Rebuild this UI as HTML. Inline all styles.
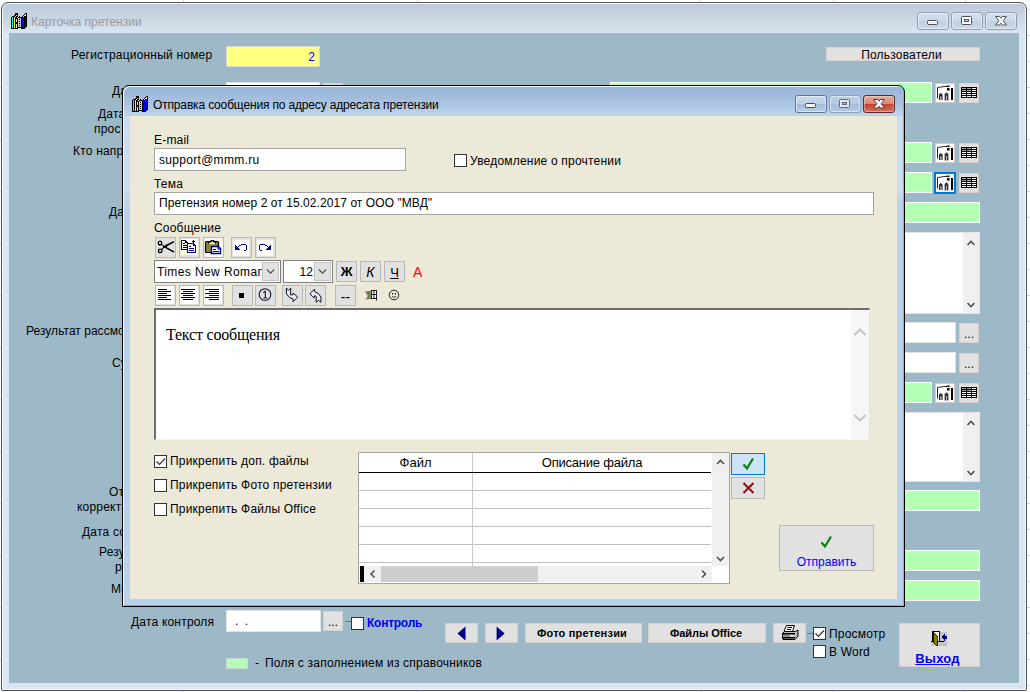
<!DOCTYPE html>
<html lang="ru">
<head>
<meta charset="utf-8">
<title>Карточка претензии</title>
<style>
*{box-sizing:border-box;margin:0;padding:0}
html,body{width:1030px;height:692px;overflow:hidden}
body{position:relative;background:#fff;font-family:"Liberation Sans",sans-serif;font-size:12px;color:#000;
 background-image:repeating-linear-gradient(to bottom,transparent 0,transparent 9px,#d4d4d4 9px,#d4d4d4 10px,transparent 10px,transparent 26px)}
.a{position:absolute;white-space:nowrap}
.vl{position:absolute;top:0;width:1px;height:692px;background:#d4d4d4}
/* main window */
#mw{left:1px;top:2px;width:1026px;height:689px;border:1px solid #555;border-radius:7px 7px 2px 2px;
 background:linear-gradient(to bottom,#bccbdb 0,#c7d4e1 14px,#d2dfeb 24px,#dae6f3 31px,#dbe6f3 100%);box-shadow:inset 0 0 0 1px #f2f6fb}
#mc{left:9px;top:33px;width:1010px;height:650px;background:#9db9c7}
.lbl{position:absolute;white-space:nowrap;line-height:14px;font-size:12px;letter-spacing:0.2px}
.fld{position:absolute;background:#fff;border:1px solid #e3e3e3}
.grn{position:absolute;background:#b3ffb3;border:1px solid #fcfcfc}
.btn{position:absolute;background:#e1e1e1;border:1px solid #d8d0d0;text-align:center;white-space:nowrap}
.cb{position:absolute;width:13px;height:13px;background:#fff;border:1px solid #333}
.cap{position:absolute;top:12px;width:32px;height:18px;border:1px solid #8f9fb3;border-radius:3px;
 background:linear-gradient(to bottom,#d5e0ed 0,#cad7e6 50%,#c0cfe0 50%,#cbd8e7 100%);box-shadow:inset 0 0 0 1px rgba(255,255,255,.45)}
.ib{width:20px;height:20px;background:#fff;border:1px solid #d6cccc;padding-top:1px;line-height:0}
.ig{width:20px;height:20px;padding-top:3px;line-height:0}
.sb{position:absolute;width:16px;background:#f0f0f0;line-height:0}
#dw{left:122px;top:85px;width:783px;height:522px;border:1px solid #000;border-radius:7px 7px 0 0;
 background:linear-gradient(to bottom,#98b4d6 0,#a3bddc 12px,#afc8e4 21px,#bdd3ec 29px,#b9d1ea 31px,#b9d1ea 100%);
 box-shadow:inset 1px 1px 0 0 #f4f8fc,inset -1px -1px 0 0 #35d0f5}
#dc{left:130px;top:116px;width:767px;height:483px;background:#ece9d8}
.dcap{border-color:#5f7591;background:linear-gradient(to bottom,#c9daee 0,#bccfe6 50%,#a3bcda 50%,#b7cce5 100%);box-shadow:inset 0 0 0 1px rgba(255,255,255,.5)}
.dclose{border-color:#5a2a28;background:linear-gradient(to bottom,#e9aa9a 0,#d98876 50%,#c2412a 50%,#d5755f 100%);box-shadow:inset 0 0 0 1px rgba(255,255,255,.35)}
.inp{position:absolute;background:#fff;border:1px solid #a3a3a3;padding-left:5px;white-space:nowrap;font-size:12px;letter-spacing:0.1px}
.tb{position:absolute;width:21px;height:21px;background:#e1e1e1;border:1px solid #b8b8b8;text-align:center;white-space:nowrap;line-height:0;padding-top:0}
.tb svg{position:absolute;left:0;top:0}
.dd{position:absolute;width:17px;height:19px;background:#e1e1e1;border:1px solid #c4c4c4;line-height:0}
</style>
</head>
<body>
<div class="vl" style="left:183px"></div><div class="vl" style="left:417px"></div><div class="vl" style="left:700px"></div><div class="vl" style="left:833px"></div><div class="vl" style="left:965px"></div>

<div id="mw" class="a"></div>
<!-- main title -->
<svg class="a" style="left:11px;top:13px" width="16" height="16" viewBox="0 0 16 16" shape-rendering="crispEdges"><use href="#books"/></svg>
<div class="a" style="left:31px;top:14px;font-size:12px;line-height:16px;color:#9a9a9a;letter-spacing:0">Карточка претензии</div>
<div class="cap" style="left:917px"><svg width="30" height="16" viewBox="0 0 30 16"><rect x="9.500" y="7.500" width="10" height="4" rx="1" fill="#f4f4f4" stroke="#4a5260"/></svg></div>
<div class="cap" style="left:951px"><svg width="30" height="16" viewBox="0 0 30 16"><rect x="9.500" y="3.500" width="10" height="8" rx="1" fill="#fff" stroke="#4a5260"/><rect x="12.500" y="6.500" width="4" height="2" fill="#c9d6e5" stroke="#4a5260"/></svg></div>
<div class="cap" style="left:985px"><svg width="30" height="16" viewBox="0 0 30 16"><path d="M9.500 3.500h4.200l1.300 1.700 1.300-1.700h4.200l-3.400 4.200 3.400 4.300h-4.200l-1.300-1.800-1.300 1.800h-4.200l3.400-4.300z" fill="#fff" stroke="#4a5260" stroke-width="1" stroke-linejoin="round"/></svg></div>

<div id="mc" class="a"></div>

<!-- MAINFORM -->
<div class="lbl" style="left:71px;top:48px">Регистрационный номер</div>
<div class="lbl" style="left:112px;top:84px">Дата претензии</div>
<div class="lbl" style="left:98px;top:107px">Дата контроля</div>
<div class="lbl" style="left:94px;top:122px;width:27px;overflow:hidden">просроченности</div>
<div class="lbl" style="left:73px;top:144px">Кто направил претензию</div>
<div class="lbl" style="left:109px;top:205px">Дата получения</div>
<div class="lbl" style="left:26px;top:324px;letter-spacing:0.03px">Результат рассмотрения претензии</div>
<div class="lbl" style="left:112px;top:356px">Сумма претензии</div>
<div class="lbl" style="left:109px;top:485px">Ответственный за</div>
<div class="lbl" style="left:77px;top:500px">корректирующие действия</div>
<div class="lbl" style="left:82px;top:525px">Дата составления</div>
<div class="lbl" style="left:99px;top:545px">Результат</div>
<div class="lbl" style="left:115px;top:560px">рассмотрения</div>
<div class="lbl" style="left:111px;top:582px">Место хранения</div>
<div class="lbl" style="left:131px;top:615px">Дата контроля</div>

<div class="fld" style="left:226px;top:46px;width:94px;height:21px;background:#ffff80;border-color:#d6d8cc;color:#0000ff;font-size:12px;line-height:21px;text-align:right;padding-right:4px">2</div>
<div class="fld" style="left:226px;top:82px;width:94px;height:22px"></div>
<div class="btn" style="left:323px;top:83px;width:20px;height:20px">...</div>

<div class="btn" style="left:826px;top:47px;width:154px;height:14px;line-height:14px;letter-spacing:0.2px;padding-right:3px;overflow:hidden">Пользователи</div>

<div class="grn" style="left:610px;top:82px;width:322px;height:21px"></div>
<div class="btn ib" style="left:935px;top:83px"><svg width="16" height="16" viewBox="0 0 16 16"><use href="#frm"/></svg></div>
<div class="btn ig" style="left:959px;top:83px"><svg width="16" height="11" viewBox="0 0 16 11" shape-rendering="crispEdges"><use href="#tbl"/></svg></div>

<div class="grn" style="left:610px;top:142px;width:322px;height:21px"></div>
<div class="btn ib" style="left:935px;top:143px"><svg width="16" height="16" viewBox="0 0 16 16"><use href="#frm"/></svg></div>
<div class="btn ig" style="left:959px;top:143px"><svg width="16" height="11" viewBox="0 0 16 11" shape-rendering="crispEdges"><use href="#tbl"/></svg></div>

<div class="grn" style="left:610px;top:172px;width:322px;height:21px"></div>
<div class="btn ib" style="left:934px;top:172px;width:22px;height:22px;border:2px solid #0078d7;padding-top:1px"><svg width="16" height="16" viewBox="0 0 16 16"><use href="#frm"/></svg></div>
<div class="btn ig" style="left:959px;top:173px"><svg width="16" height="11" viewBox="0 0 16 11" shape-rendering="crispEdges"><use href="#tbl"/></svg></div>

<div class="grn" style="left:610px;top:202px;width:370px;height:21px"></div>

<div class="fld" style="left:610px;top:232px;width:370px;height:82px"></div>
<div class="sb" style="left:963px;top:233px;height:80px"><svg width="16" height="80" viewBox="0 0 16 80"><path d="M4.500 12 8 8.500 11.500 12M4.500 70 8 73.500 11.500 70" fill="none" stroke="#505050" stroke-width="1.600"/></svg></div>

<div class="fld" style="left:610px;top:322px;width:346px;height:21px"></div>
<div class="btn" style="left:959px;top:323px;width:20px;height:20px;line-height:20px">...</div>
<div class="fld" style="left:610px;top:352px;width:346px;height:21px"></div>
<div class="btn" style="left:959px;top:353px;width:20px;height:20px;line-height:20px">...</div>

<div class="grn" style="left:610px;top:382px;width:322px;height:21px"></div>
<div class="btn ib" style="left:935px;top:383px"><svg width="16" height="16" viewBox="0 0 16 16"><use href="#frm"/></svg></div>
<div class="btn ig" style="left:959px;top:383px"><svg width="16" height="11" viewBox="0 0 16 11" shape-rendering="crispEdges"><use href="#tbl"/></svg></div>

<div class="fld" style="left:610px;top:412px;width:370px;height:70px"></div>
<div class="sb" style="left:963px;top:413px;height:68px"><svg width="16" height="68" viewBox="0 0 16 68"><path d="M4.500 12 8 8.500 11.500 12M4.500 58 8 61.500 11.500 58" fill="none" stroke="#505050" stroke-width="1.600"/></svg></div>

<div class="grn" style="left:610px;top:490px;width:370px;height:21px"></div>
<div class="grn" style="left:610px;top:550px;width:370px;height:21px"></div>
<div class="grn" style="left:610px;top:580px;width:370px;height:21px"></div>

<!-- bottom row -->
<div class="fld" style="left:226px;top:610px;width:95px;height:22px;line-height:20px;padding-left:8px;letter-spacing:6.500px">..</div>
<div class="btn" style="left:323px;top:611px;width:20px;height:20px;line-height:20px">...</div>
<div class="a" style="left:345px;top:621px;width:7px;height:1px;background:#6a7a86"></div>
<div class="cb" style="left:351px;top:617px"></div>
<div class="a" style="left:367px;top:616px;font-size:12px;line-height:14px;font-weight:bold;color:#0000ff;letter-spacing:-0.25px">Контроль</div>
<div class="btn" style="left:445px;top:623px;width:33px;height:20px"><svg width="31" height="18" viewBox="0 0 31 18"><path d="M19.500 2.500v14L11.400 9.500z" fill="#000080"/></svg></div>
<div class="btn" style="left:485px;top:623px;width:33px;height:20px"><svg width="31" height="18" viewBox="0 0 31 18"><path d="M10.600 2.500v14L18.700 9.500z" fill="#000080"/></svg></div>
<div class="btn" style="left:525px;top:623px;width:117px;height:20px;font-size:11px;font-weight:bold;line-height:18px;letter-spacing:0.2px;padding-right:3px">Фото претензии</div>
<div class="btn" style="left:648px;top:623px;width:118px;height:20px;font-size:11px;font-weight:bold;line-height:18px;letter-spacing:-0.07px;padding-right:2px">Файлы Office</div>
<div class="btn" style="left:773px;top:623px;width:33px;height:20px"><svg width="18" height="16" viewBox="0 0 18 16" style="margin-top:1px"><use href="#prn"/></svg></div>
<div class="a" style="left:807px;top:633px;width:6px;height:1px;background:#6a7a86"></div>
<div class="cb" style="left:813px;top:627px"><svg width="11" height="11" viewBox="0 0 11 11" style="display:block"><path d="M1.500 5.500 4.500 8.500 10 2.500" fill="none" stroke="#333" stroke-width="1.200"/></svg></div>
<div class="lbl" style="left:829px;top:627px">Просмотр</div>
<div class="cb" style="left:813px;top:645px"></div>
<div class="lbl" style="left:829px;top:645px">В Word</div>
<div class="btn" style="left:899px;top:623px;width:81px;height:44px"></div>
<svg class="a" style="left:931px;top:631px" width="16" height="15" viewBox="0 0 16 15" shape-rendering="crispEdges"><use href="#exit"/></svg>
<div class="a" style="left:897px;top:651px;width:81px;text-align:center;font-size:13px;font-weight:bold;line-height:15px;color:#0000ff;text-decoration:underline;letter-spacing:0.2px">Выход</div>

<div class="grn" style="left:226px;top:658px;width:22px;height:11px;border-color:#c8d4d8"></div>
<div class="lbl" style="left:255px;top:656px">-</div>
<div class="lbl" style="left:265px;top:656px">Поля с заполнением из справочников</div>
<!-- /MAINFORM -->

<!-- DIALOG -->
<div id="dw" class="a"></div>
<svg class="a" style="left:132px;top:96px" width="16" height="16" viewBox="0 0 16 16" shape-rendering="crispEdges"><use href="#books"/></svg>
<div class="a" style="left:153px;top:97px;font-size:12px;line-height:16px;color:#000;letter-spacing:-0.16px">Отправка сообщения по адресу адресата претензии</div>
<div class="cap dcap" style="left:795px;top:95px"><svg width="30" height="16" viewBox="0 0 30 16"><rect x="9.500" y="7.500" width="10" height="4" rx="1" fill="#f4f4f4" stroke="#3f4856"/></svg></div>
<div class="cap dcap" style="left:829px;top:95px;border-color:#8aa0bd;background:linear-gradient(to bottom,#bccfe6 0,#b4c9e2 50%,#a7bfdc 50%,#b5cae3 100%)"><svg width="30" height="16" viewBox="0 0 30 16"><rect x="9.500" y="3.500" width="10" height="8" rx="1" fill="#e4e8ee" stroke="#606a78"/><rect x="12.500" y="6.500" width="4" height="2" fill="#9fb3cc" stroke="#606a78"/></svg></div>
<div class="cap dclose" style="left:863px;top:95px"><svg width="30" height="16" viewBox="0 0 30 16"><path d="M9.500 3.500h4.200l1.300 1.700 1.300-1.700h4.200l-3.400 4.200 3.400 4.300h-4.200l-1.300-1.800-1.300 1.800h-4.200l3.400-4.300z" fill="#fff" stroke="#5a3a38" stroke-width="1" stroke-linejoin="round"/></svg></div>
<div class="a" style="left:124px;top:116px;width:6px;height:92px;background:linear-gradient(to bottom,rgba(255,255,255,.25) 0,rgba(255,255,255,.25) 80%,rgba(255,255,255,0) 100%)"></div><div class="a" style="left:897px;top:116px;width:6px;height:92px;background:linear-gradient(to bottom,rgba(255,255,255,.25) 0,rgba(255,255,255,.25) 80%,rgba(255,255,255,0) 100%)"></div>
<div id="dc" class="a"></div>

<div class="lbl" style="left:154px;top:133px">E-mail</div>
<div class="inp" style="left:154px;top:148px;width:252px;height:23px;line-height:22px;letter-spacing:0.3px;padding-left:4px">support@mmm.ru</div>
<div class="cb" style="left:454px;top:154px"></div>
<div class="lbl" style="left:470px;top:154px">Уведомление о прочтении</div>
<div class="lbl" style="left:154px;top:177px">Тема</div>
<div class="inp" style="left:154px;top:192px;width:720px;height:23px;line-height:21px;letter-spacing:0.07px;padding-left:4px">Претензия номер 2 от 15.02.2017 от ООО "МВД"</div>
<div class="lbl" style="left:154px;top:221px">Сообщение</div>

<!-- toolbar row1 -->
<div class="tb" style="left:155px;top:237px"><svg width="19" height="19" viewBox="0 0 19 19"><use href="#i-cut"/></svg></div>
<div class="tb" style="left:179px;top:237px"><svg width="19" height="19" viewBox="0 0 19 19"><use href="#i-copy"/></svg></div>
<div class="tb" style="left:203px;top:237px"><svg width="19" height="19" viewBox="0 0 19 19"><use href="#i-paste"/></svg></div>
<div class="tb" style="left:231px;top:237px"><svg width="19" height="19" viewBox="0 0 19 19"><use href="#i-undo"/></svg></div>
<div class="tb" style="left:255px;top:237px"><svg width="19" height="19" viewBox="0 0 19 19"><use href="#i-redo"/></svg></div>
<!-- row2 -->
<div class="inp" style="left:154px;top:260px;width:127px;height:23px;border-color:#7f7f7f;line-height:23px;padding-left:2px;overflow:hidden;letter-spacing:0.4px">Times New Roman</div>
<div class="dd" style="left:262px;top:262px"><svg width="15" height="17" viewBox="0 0 15 17"><path d="M3.800 6.500 7.500 10.200 11.200 6.500" fill="none" stroke="#505050" stroke-width="1.200"/></svg></div>
<div class="inp" style="left:283px;top:260px;width:50px;height:23px;border-color:#7f7f7f;line-height:23px;padding:0 19px 0 0;text-align:right">12</div>
<div class="dd" style="left:314px;top:262px"><svg width="15" height="17" viewBox="0 0 15 17"><path d="M3.800 6.500 7.500 10.200 11.200 6.500" fill="none" stroke="#505050" stroke-width="1.200"/></svg></div>
<div class="tb" style="left:336px;top:261px;font-size:13px;font-weight:bold;line-height:20px">Ж</div>
<div class="tb" style="left:360px;top:261px;font-size:14px;font-style:italic;line-height:21px">К</div>
<div class="tb" style="left:384px;top:261px;font-size:13px;line-height:21px;text-decoration:underline">Ч</div>
<div class="a" style="left:413px;top:263px;font-size:14px;line-height:19px;color:#ff0000">А</div>
<!-- row3 -->
<div class="tb" style="left:155px;top:285px"><svg width="19" height="19" viewBox="0 0 19 19" shape-rendering="crispEdges"><use href="#i-al"/></svg></div>
<div class="tb" style="left:179px;top:285px"><svg width="19" height="19" viewBox="0 0 19 19" shape-rendering="crispEdges"><use href="#i-ac"/></svg></div>
<div class="tb" style="left:203px;top:285px"><svg width="19" height="19" viewBox="0 0 19 19" shape-rendering="crispEdges"><use href="#i-ar"/></svg></div>
<div class="tb" style="left:232px;top:285px"><svg width="19" height="19" viewBox="0 0 19 19" shape-rendering="crispEdges"><rect x="6" y="7" width="5" height="5" fill="#000"/></svg></div>
<div class="tb" style="left:255px;top:285px"><svg width="19" height="19" viewBox="0 0 19 19"><circle cx="9" cy="8.500" r="5.800" fill="none" stroke="#101030" stroke-width="1.100"/><path d="M7.300 6.700 9.300 5.300v6.700M7.500 12h3.600" fill="none" stroke="#101030" stroke-width="1.100"/></svg></div>
<div class="tb" style="left:282px;top:285px"><svg width="19" height="19" viewBox="0 0 19 19"><use href="#i-ind"/></svg></div>
<div class="tb" style="left:305px;top:285px"><svg width="19" height="19" viewBox="0 0 19 19"><use href="#i-out"/></svg></div>
<div class="tb" style="left:335px;top:285px;line-height:23px;font-size:14px;letter-spacing:0">--</div>
<svg class="a" style="left:364px;top:289px" width="13" height="12" viewBox="0 0 13 12"><use href="#i-tab"/></svg>
<svg class="a" style="left:388px;top:289px" width="12" height="12" viewBox="0 0 12 12"><circle cx="6" cy="6" r="4.800" fill="none" stroke="#222" stroke-width="1"/><rect x="4" y="4" width="1" height="1.500" fill="#000"/><rect x="7" y="4" width="1" height="1.500" fill="#000"/><path d="M3.800 7c1 1.800 3.400 1.800 4.400 0" fill="none" stroke="#222" stroke-width="0.900"/></svg>

<!-- text area -->
<div class="a" style="left:154px;top:308px;width:716px;height:132px;background:#fff;border-top:2px solid #6d6d6d;border-left:2px solid #6d6d6d;border-right:1px solid #e3e3e3;border-bottom:1px solid #f4f4f0"></div>
<div class="a" style="left:851px;top:310px;width:18px;height:129px;background:#f6f6f6"><svg width="18" height="129" viewBox="0 0 18 129"><path d="M3.500 25 9 19.500 14.500 25M3.500 105 9 110.500 14.500 105" fill="none" stroke="#c4c4c4" stroke-width="2"/></svg></div>
<div class="a" style="left:166px;top:325px;font-family:'Liberation Serif',serif;font-size:16px;line-height:20px;letter-spacing:-0.2px">Текст сообщения</div>

<!-- checkboxes -->
<div class="cb" style="left:154px;top:455px"><svg width="11" height="11" viewBox="0 0 11 11" style="display:block"><path d="M1.500 5.500 4.500 8.500 10 2.500" fill="none" stroke="#333" stroke-width="1.200"/></svg></div>
<div class="lbl" style="left:170px;top:454px">Прикрепить доп. файлы</div>
<div class="cb" style="left:154px;top:479px"></div>
<div class="lbl" style="left:170px;top:478px">Прикрепить Фото претензии</div>
<div class="cb" style="left:154px;top:503px"></div>
<div class="lbl" style="left:170px;top:502px">Прикрепить Файлы Office</div>

<!-- grid -->
<div class="a" style="left:358px;top:452px;width:372px;height:132px;background:#fff;border:1px solid #a5a5a5"></div>
<div class="a" style="left:359px;top:453px;width:352px;height:113px;
 background:
 linear-gradient(#000,#000) 0 19px/100% 1px no-repeat,
 linear-gradient(#c8c8c8,#c8c8c8) 113px 0/1px 100% no-repeat,
 linear-gradient(#c0c0c0,#c0c0c0) 0 37px/100% 1px no-repeat,
 linear-gradient(#c0c0c0,#c0c0c0) 0 55px/100% 1px no-repeat,
 linear-gradient(#c0c0c0,#c0c0c0) 0 73px/100% 1px no-repeat,
 linear-gradient(#c0c0c0,#c0c0c0) 0 91px/100% 1px no-repeat,
 linear-gradient(#c0c0c0,#c0c0c0) 0 109px/100% 1px no-repeat"></div>
<div class="lbl" style="left:359px;top:455px;width:113px;text-align:center;font-size:13px;line-height:15px;letter-spacing:0">Файл</div>
<div class="lbl" style="left:473px;top:455px;width:238px;text-align:center;font-size:13px;line-height:15px;letter-spacing:-0.22px">Описание файла</div>
<div class="a" style="left:712px;top:453px;width:17px;height:113px;background:#f0f0f0"><svg width="17" height="113" viewBox="0 0 17 113"><path d="M5 11 8.500 7.500 12 11M5 104 8.500 107.500 12 104" fill="none" stroke="#505050" stroke-width="1.600"/></svg></div>
<div class="a" style="left:360px;top:566px;width:352px;height:16px;background:#f0f0f0"><svg width="352" height="16" viewBox="0 0 352 16"><rect x="0" y="0" width="4" height="16" fill="#000"/><rect x="21" y="0" width="157" height="16" fill="#cdcdcd"/><path d="M14.500 4.500 11 8 14.500 11.500M342 4.500 345.500 8 342 11.500" fill="none" stroke="#505050" stroke-width="1.600"/></svg></div>

<div class="tb" style="left:731px;top:453px;width:34px;height:22px;background:#cce4f7;border-color:#0078d7"><svg width="18" height="18" viewBox="0 0 18 18" style="left:7px;top:1px"><path d="M4.500 9.500 8 13.500 14 3.500" fill="none" stroke="#0a7f0a" stroke-width="2.200"/></svg></div>
<div class="tb" style="left:731px;top:477px;width:34px;height:22px"><svg width="18" height="18" viewBox="0 0 18 18" style="left:7px;top:1px"><path d="M4.500 4 14.500 14M14.500 4 4.500 14" fill="none" stroke="#8b0f0f" stroke-width="2.100"/></svg></div>

<div class="tb" style="left:779px;top:525px;width:95px;height:46px"></div>
<svg class="a" style="left:817px;top:533px" width="18" height="18" viewBox="0 0 18 18"><path d="M4.500 9.500 8 13.500 14 3.500" fill="none" stroke="#0a7f0a" stroke-width="2.200"/></svg>
<div class="a" style="left:779px;top:555px;width:95px;text-align:center;font-size:12px;line-height:14px;color:#0000ff;letter-spacing:0">Отправить</div>
<!-- /DIALOG -->

<svg width="0" height="0" style="position:absolute">
<defs>
<g id="tbl"><rect width="16" height="11" fill="#000"/>
<g fill="#fff"><rect x="1" y="1" width="4" height="1" fill="#a0a0a0"/><rect x="6" y="1" width="4" height="1" fill="#a0a0a0"/><rect x="11" y="1" width="4" height="1"/>
<rect x="1" y="3" width="4" height="1" fill="#a0a0a0"/><rect x="6" y="3" width="4" height="1" fill="#a0a0a0"/><rect x="11" y="3" width="4" height="1"/>
<rect x="1" y="5" width="4" height="1"/><rect x="6" y="5" width="4" height="1"/><rect x="11" y="5" width="4" height="1"/>
<rect x="1" y="7" width="4" height="1"/><rect x="6" y="7" width="4" height="1"/><rect x="11" y="7" width="4" height="1"/>
<rect x="1" y="9" width="4" height="1"/><rect x="6" y="9" width="4" height="1"/><rect x="11" y="9" width="4" height="1"/></g></g>
<g id="frm"><path d="M0.500 13.500V2.500L12.500 0.800" fill="none" stroke="#222" stroke-width="1"/><path d="M9 1.300l3.500-.5v1l-3.500.5z" fill="#111"/><rect x="14" y="3" width="2" height="12" fill="#000"/><rect x="10" y="3" width="2.600" height="2.600" fill="#111"/>
<path d="M2 15V9.500l1.800-1.600 1.800 1.600V15h-1.300v-3.500h-1V15z" fill="#2a2a2a"/><path d="M3.300 11.500h1V15h-1z" fill="#999"/><path d="M7.600 15.500V9l1.900-1.700 1.900 1.700v6.500h-1.400V11.500h-1v4z" fill="#3a3a3a"/><path d="M9 11.500h1v4h-1z" fill="#aaa"/></g>
<g id="prn"><path d="M5.500 0.500h8l-2 6h-8.500z" fill="#fff" stroke="#000"/><path d="M6.500 2.500h4.500M6 4.500h4" stroke="#000" fill="none"/>
<path d="M1.500 8.500 3.500 6.500h11l2.500 -1.500v6l-3 3.500h-12z" fill="#c0c0c0" stroke="#000"/><rect x="1" y="8" width="13" height="1.500" fill="#000"/><rect x="1" y="12" width="13" height="1.500" fill="#000"/><rect x="2.500" y="10" width="9" height="1.500" fill="#808080"/><rect x="9" y="10" width="3" height="1.500" fill="#fff"/></g>
<g id="exit"><rect x="0" y="0" width="16" height="15" fill="#e1e1e1"/><rect x="8" y="1" width="8" height="14" fill="#c4c4c4"/><rect x="0" y="11" width="8" height="4" fill="#c4c4c4"/>
<rect x="1" y="0" width="8" height="11" fill="#000"/><rect x="3" y="1" width="5" height="9" fill="#fff"/><rect x="0" y="10" width="13" height="1" fill="#000"/>
<path d="M2 1 6 4.500V15L2 11z" fill="#808000" stroke="#000" stroke-width="0.800"/>
<path d="M10.300 6 13.500 2.500v2h3v3h-3v2z" fill="#000080"/></g>
<g id="i-cut"><ellipse cx="4" cy="5.100" rx="1.700" ry="1.900" fill="none" stroke="#000" stroke-width="1.300"/><ellipse cx="4.200" cy="12.900" rx="1.800" ry="1.800" fill="none" stroke="#000" stroke-width="1.300"/><path d="M5.400 6.400 8 8.200 18 13.600 17.600 14.200 10.600 10.400zM5.600 11.500 8 9.600 18 4.100 17.600 3.500 9 7.600z" fill="#000" stroke="#000" stroke-width="0.800" stroke-linejoin="round"/><rect x="7" y="8" width="4" height="2" fill="#000"/></g>
<g id="i-copy" shape-rendering="crispEdges"><rect x="1" y="1" width="17" height="16" fill="#fff"/><path d="M1.500 2.500H5.500L7.500 4.500V11.500H1.500Z" fill="#fff" stroke="#000"/><path d="M5.500 2.500V4.500H7.500" fill="none" stroke="#000"/><rect x="3" y="5" width="2" height="1"/><rect x="3" y="7" width="4" height="1"/><rect x="3" y="9" width="4" height="1"/><path d="M7.500 5.500H13.500L15.500 7.500V14.500H7.500Z" fill="#fff" stroke="#00008b" stroke-width="1"/><path d="M13.500 5.500V7.500H15.500" fill="none" stroke="#00008b"/><g fill="#00008b"><rect x="9" y="8" width="2" height="1"/><rect x="9" y="10" width="5" height="1"/><rect x="9" y="12" width="5" height="1"/><rect x="12" y="3" width="3" height="1"/><rect x="13" y="2" width="1" height="3"/></g></g>
<g id="i-paste"><rect x="0" y="0" width="19" height="19" fill="#f6f6f6"/><rect x="1.500" y="3.500" width="13" height="11" rx="1" fill="#84843a" stroke="#000" stroke-width="1.200"/><path d="M4.500 6V4.500H6L7.200 2.500H9.800L11 4.500h.500V6" fill="none" stroke="#000" stroke-width="1.100"/><path d="M6.400 4.800 8.200 2.900 10 4.800z" fill="#ffee00"/><rect x="5.200" y="4.800" width="6" height="1.400" fill="#fff"/><path d="M7.500 8.500H14.300L16.500 10.700V15.500H7.500Z" fill="#fff" stroke="#00008b" stroke-width="1.400"/><path d="M14 8.500V11h2.500" fill="none" stroke="#00008b"/><rect x="9" y="11" width="3" height="1" fill="#00008b"/><rect x="9" y="13" width="6" height="1" fill="#00008b"/></g>
<g id="i-undo" shape-rendering="crispEdges"><rect x="1" y="2" width="16" height="16" fill="#fff"/><g fill="#00009a"><rect x="3" y="7" width="1" height="5"/><rect x="4" y="8" width="1" height="4"/><rect x="5" y="9" width="1" height="3"/><rect x="6" y="10" width="1" height="2"/><rect x="7" y="11" width="1" height="1"/><rect x="9" y="6" width="5" height="1"/><rect x="7" y="7" width="2" height="1"/><rect x="6" y="8" width="1" height="1"/><rect x="14" y="7" width="1" height="5"/><rect x="12" y="12" width="2" height="1"/></g></g>
<g id="i-redo" shape-rendering="crispEdges"><rect x="1" y="2" width="16" height="16" fill="#fff"/><g fill="#00009a"><rect x="14" y="7" width="1" height="5"/><rect x="13" y="8" width="1" height="4"/><rect x="12" y="9" width="1" height="3"/><rect x="11" y="10" width="1" height="2"/><rect x="10" y="11" width="1" height="1"/><rect x="4" y="6" width="5" height="1"/><rect x="9" y="7" width="2" height="1"/><rect x="11" y="8" width="1" height="1"/><rect x="3" y="7" width="1" height="5"/><rect x="4" y="12" width="2" height="1"/></g></g>
<g id="i-al"><rect x="0" y="0" width="18" height="18" fill="#fff"/><g fill="#000"><rect x="2" y="3" width="9" height="1"/><rect x="2" y="5" width="13" height="1"/><rect x="2" y="7" width="9" height="1"/><rect x="2" y="9" width="13" height="1"/><rect x="2" y="11" width="9" height="1"/><rect x="2" y="13" width="13" height="1"/></g></g>
<g id="i-ac"><rect x="0" y="0" width="18" height="18" fill="#fff"/><g fill="#000"><rect x="1" y="3" width="14" height="1"/><rect x="3" y="5" width="10" height="1"/><rect x="1" y="7" width="14" height="1"/><rect x="3" y="9" width="10" height="1"/><rect x="1" y="11" width="14" height="1"/><rect x="3" y="13" width="10" height="1"/></g></g>
<g id="i-ar"><rect x="0" y="0" width="18" height="18" fill="#fff"/><g fill="#000"><rect x="1" y="3" width="14" height="1"/><rect x="5" y="5" width="10" height="1"/><rect x="1" y="7" width="14" height="1"/><rect x="5" y="9" width="10" height="1"/><rect x="1" y="11" width="14" height="1"/><rect x="5" y="13" width="10" height="1"/></g></g>
<g id="i-ind"><path d="M3.300 2.100 5.500 4.300 7.800 2.100 7.500 8.700 9.900 8.900 10.100 7 14.700 11.100 10.100 15.700 9.900 12.800 6.700 11.600 3.500 7.900z" fill="#eaeaee" stroke="#0c0c20" stroke-width="1" stroke-linejoin="round"/></g>
<g id="i-out"><path d="M3.900 7.900 8.500 3.100 8.700 5.700 12.300 7.400 15 11.100 14.800 16.400 12.600 14.200 10.200 16.400 10.200 10.600 8.700 9.600 8 12z" fill="#eaeaee" stroke="#0c0c20" stroke-width="1" stroke-linejoin="round"/></g>
<g id="i-tab"><rect x="7.500" y="1.500" width="5" height="8" fill="#fff" stroke="#1a1a2a" stroke-width="1"/><path d="M10 1.500v8M7.500 5.500h5" stroke="#1a1a2a" fill="none" stroke-width="1"/><path d="M12.500 9.500v2" stroke="#1a1a2a" stroke-width="1"/><path d="M1 2.500 6.800 1.800V10L2 10.500 3.800 6.500z" fill="#7d7a52"/><path d="M0.500 2h1.200v1.200H.5zM1 9.500h1.200v1.200H1zM2 5.500h1.200v1.200H2z" fill="#e9a0a8"/><path d="M4 7h2v2.500H4z" fill="#5a8a5a"/></g>
<g id="books">
 <rect x="0" y="4" width="7" height="12" fill="#000"/>
 <rect x="1" y="3" width="2" height="1" fill="#000"/><rect x="2" y="2" width="2" height="1" fill="#000"/><rect x="3" y="1" width="4" height="1" fill="#000"/><rect x="4" y="0" width="3" height="1" fill="#000"/>
 <rect x="5" y="1" width="2" height="4" fill="#000"/><rect x="3" y="2" width="4" height="2" fill="#000"/>
 <rect x="3" y="1" width="1" height="1" fill="#e8e0d8"/><rect x="2" y="2" width="1" height="1" fill="#e8e0d8"/>
 <rect x="1" y="4" width="1" height="11" fill="#00ffff"/>
 <rect x="3" y="4" width="1" height="11" fill="#ffff00"/>
 <rect x="4" y="3" width="1" height="1" fill="#ffff00"/><rect x="5" y="2" width="1" height="1" fill="#ffff00"/>
 <rect x="5" y="6" width="1" height="3" fill="#e8e0d0"/>
 <rect x="5" y="11" width="1" height="4" fill="#e8e0d0"/>
 <rect x="7" y="5" width="3" height="9" fill="#cfc8c0"/>
 <rect x="7" y="3" width="2" height="2" fill="#000"/><rect x="7" y="4" width="3" height="1" fill="#000"/>
 <rect x="7" y="3" width="1" height="1" fill="#e8e0d8"/><rect x="6" y="4" width="1" height="1" fill="#e8e0d8"/>
 <rect x="7" y="14" width="3" height="1" fill="#000"/>
 <rect x="8" y="6" width="1" height="1" fill="#000"/><rect x="8" y="8" width="1" height="1" fill="#000"/><rect x="8" y="10" width="1" height="1" fill="#000"/><rect x="8" y="12" width="1" height="1" fill="#000"/>
 <rect x="10" y="4" width="4" height="12" fill="#000"/>
 <rect x="11" y="3" width="1" height="1" fill="#000"/><rect x="12" y="2" width="1" height="1" fill="#000"/><rect x="13" y="1" width="1" height="1" fill="#000"/><rect x="14" y="0" width="2" height="1" fill="#000"/>
 <rect x="15" y="0" width="1" height="14" fill="#000"/>
 <rect x="13" y="3" width="1" height="12" fill="#000"/>
 <rect x="12" y="3" width="1" height="1" fill="#e8e0d0"/><rect x="13" y="2" width="2" height="1" fill="#e8e0d0"/><rect x="14" y="1" width="1" height="1" fill="#e8e0d0"/>
 <rect x="11" y="4" width="2" height="11" fill="#0000ff"/>
 <rect x="14" y="3" width="1" height="11" fill="#0000d8"/>
 <rect x="14" y="14" width="1" height="1" fill="#000"/>
</g>
</defs>
</svg>
</body>
</html>
